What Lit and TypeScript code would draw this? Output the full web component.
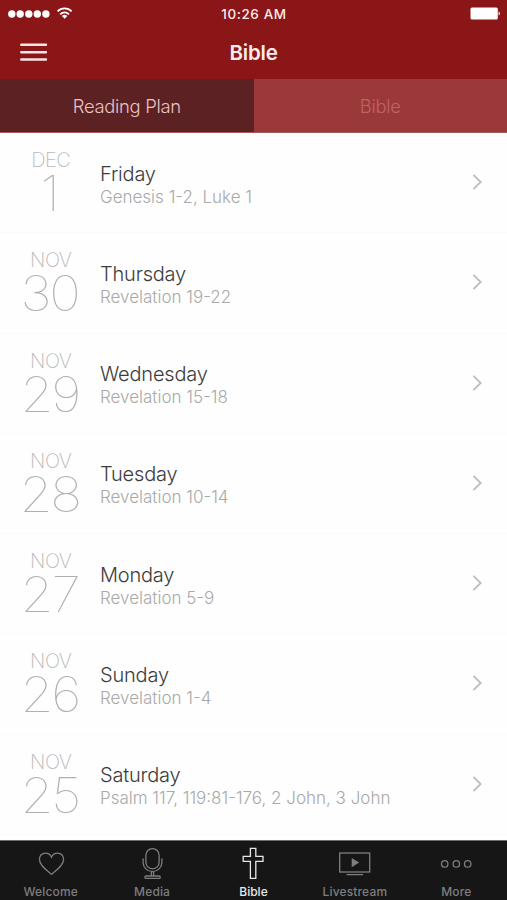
import { LitElement, html, css, svg } from "lit";
import { customElement } from "lit/decorators.js";
import { classMap } from "lit/directives/class-map.js";

interface Reading {
  month: string;
  day: string;
  weekday: string;
  passage: string;
}

const READINGS: Reading[] = [
  { month: "DEC", day: "1", weekday: "Friday", passage: "Genesis 1-2, Luke 1" },
  { month: "NOV", day: "30", weekday: "Thursday", passage: "Revelation 19-22" },
  { month: "NOV", day: "29", weekday: "Wednesday", passage: "Revelation 15-18" },
  { month: "NOV", day: "28", weekday: "Tuesday", passage: "Revelation 10-14" },
  { month: "NOV", day: "27", weekday: "Monday", passage: "Revelation 5-9" },
  { month: "NOV", day: "26", weekday: "Sunday", passage: "Revelation 1-4" },
  { month: "NOV", day: "25", weekday: "Saturday", passage: "Psalm 117, 119:81-176, 2 John, 3 John" },
];

const TABS = [
  {
    label: "Welcome",
    icon: svg`<path d="M20.5 30.2C15.5 26.2 8.4 21.6 8.4 15.3C8.4 11.6 11.1 9.1 14.4 9.1C17.1 9.1 19.4 10.6 20.5 13.2C21.6 10.6 23.9 9.1 26.6 9.1C29.9 9.1 32.6 11.6 32.6 15.3C32.6 21.6 25.5 26.2 20.5 30.2Z"/>`,
  },
  {
    label: "Media",
    icon: svg`<rect x="13.9" y="4.6" width="13.2" height="20.2" rx="6.6"/>
      <path d="M11.1 14.5V18.4A9.4 9.2 0 0 0 29.9 18.4V14.5M19.4 27.6V32M21.6 27.6V32"/>
      <rect x="12.9" y="32" width="15.4" height="2.4" rx="1.2"/>`,
  },
  {
    label: "Bible",
    icon: svg`<path d="M17.4 4.3H22.8V12.3H30V17.3H22.8V34.3H17.4V17.3H10.2V12.3H17.4Z"/>`,
  },
  {
    label: "Livestream",
    icon: svg`<rect x="4.7" y="9" width="30" height="19"/>
      <path d="M11.5 30.6H28"/>
      <path d="M16.7 14V23.2L24.2 18.6Z" fill="currentColor" stroke="none"/>`,
  },
  {
    label: "More",
    icon: svg`<circle cx="8.7" cy="19.9" r="3.2"/><circle cx="20.3" cy="19.9" r="3.2"/><circle cx="31.7" cy="19.9" r="3.2"/>`,
  },
];

@customElement("app-header")
class AppHeader extends LitElement {
  static styles = css`
    :host {
      display: block;
      background: #8b1618;
      color: #fbecec;
    }
    .status {
      height: 27px;
      display: grid;
      grid-template-columns: 1fr auto 1fr;
      align-items: center;
      padding: 0 6px 0 7px;
    }
    .battery {
      justify-self: end;
    }
    .time {
      font-size: 13.5px;
      font-weight: 500;
      letter-spacing: 0.6px;
    }
    .nav {
      height: 52px;
      display: grid;
      grid-template-columns: 1fr auto 1fr;
      align-items: center;
      padding: 0 19px;
      box-sizing: border-box;
    }
    .title {
      margin: 0;
      font-size: 20.5px;
      line-height: 24px;
      font-weight: 600;
      letter-spacing: -0.2px;
    }
    svg {
      display: block;
    }
  `;
  render() {
    return html`
      <div class="status">
        <svg width="68" height="16" viewBox="0 0 68 16" fill="#fff">
          ${[4.8, 13.2, 21.8, 30.3, 38.9].map((x) => svg`<circle cx=${x} cy="8" r="3.7"/>`)}
          <g fill="none" stroke="#fff" stroke-width="1.7">
            <path d="M50.6 5.3A9.8 9.8 0 0 1 64.6 5.3M53.2 8.3A6.2 6.2 0 0 1 62 8.3"/>
          </g>
          <path d="M57.6 12.8L54.9 10A3.9 3.9 0 0 1 60.3 10Z"/>
        </svg>
        <span class="time">10:26 AM</span>
        <svg class="battery" width="32" height="14" viewBox="0 0 32 14" fill="#fff">
          <rect x="1.5" y="0.6" width="27.3" height="12" rx="1.5"/>
          <path d="M29.6 4.6A2.2 2.2 0 0 1 29.6 8.6Z"/>
        </svg>
      </div>
      <div class="nav">
        <svg width="30" height="22" viewBox="0 0 30 22" stroke="#fbe4e4" stroke-width="2.5" stroke-linecap="round">
          <path d="M2.3 2.8H26.9M2.3 10.3H26.9M2.3 17.6H26.9"/>
        </svg>
        <h1 class="title">Bible</h1>
      </div>
    `;
  }
}

@customElement("reading-row")
class ReadingRow extends LitElement {
  static properties = { reading: { attribute: false } };
  declare reading: Reading;
  static styles = css`
    :host {
      display: grid;
      grid-template-columns: 100px 1fr auto;
      box-sizing: border-box;
      padding-right: 22px;
    }
    .date {
      display: flex;
      flex-direction: column;
      align-items: center;
      padding: 15px 0 0 1.5px;
      color: #b9b9b9;
    }
    .month {
      font-size: 20px;
      line-height: 24px;
      font-weight: 250;
      letter-spacing: -0.5px;
    }
    .day {
      font-size: 49px;
      line-height: 43px;
      font-weight: 100;
      letter-spacing: -2.2px;
      margin-right: 2.8px;
      transform: scaleX(1.09);
      color: #b0b0b0;
    }
    .text {
      padding-top: 28.5px;
      white-space: nowrap;
    }
    .weekday {
      font-size: 20px;
      line-height: 25px;
      font-weight: 350;
      letter-spacing: -0.2px;
      color: #3c3c3c;
    }
    .passage {
      font-size: 17px;
      line-height: 20px;
      font-weight: 300;
      letter-spacing: 0;
      color: #a9a9a9;
    }
    .chevron {
      margin-top: 40.2px;
    }
  `;
  render() {
    const r = this.reading;
    return html`
      <div class="date">
        <span class="month">${r.month}</span>
        <span class="day">${r.day}</span>
      </div>
      <div class="text">
        <div class="weekday">${r.weekday}</div>
        <div class="passage">${r.passage}</div>
      </div>
      <svg class="chevron" width="14" height="18" viewBox="0 0 14 18" fill="none" stroke="#bdbdbd" stroke-width="1.8">
        <path d="M2.4 1.9L9.7 9L2.4 16.1"/>
      </svg>
    `;
  }
}

@customElement("tab-bar")
class TabBar extends LitElement {
  static styles = css`
    :host {
      display: grid;
      grid-template-columns: repeat(5, 1fr);
      background: #161616;
      border-top: 1px solid #6e6e6e;
      box-sizing: border-box;
      height: 60px;
    }
    .tab {
      display: flex;
      flex-direction: column;
      align-items: center;
      padding-top: 3px;
      color: #7e7e7e;
    }
    .active {
      color: #e8e8e8;
    }
    .label {
      font-size: 12px;
      line-height: 16px;
      font-weight: 450;
      letter-spacing: 0.15px;
      margin-top: 1px;
    }
    .active .label {
      font-weight: 550;
      letter-spacing: 0;
    }
    svg {
      display: block;
      flex: none;
    }
  `;
  render() {
    return TABS.map(
      (t) => html`
        <div class=${classMap({ tab: true, active: t.label === "Bible" })}>
          <svg width="40" height="39" viewBox="0 0 40 39" fill="none" stroke="currentColor" stroke-width="1.3">${t.icon}</svg>
          <span class="label">${t.label}</span>
        </div>
      `
    );
  }
}

@customElement("app-root")
class AppRoot extends LitElement {
  static styles = css`
    :host {
      display: flex;
      flex-direction: column;
      height: 900px;
      overflow: hidden;
      background: #fefefe;
      font-family: Inter, "Liberation Sans", sans-serif;
    }
    .segments {
      display: grid;
      grid-template-columns: 1fr 1fr;
      height: 54px;
      flex: none;
      box-sizing: border-box;
      border-bottom: 1px solid #a65a5c;
      background: #9b383a;
    }
    .segment {
      display: flex;
      align-items: center;
      justify-content: center;
      font-size: 18.4px;
      font-weight: 350;
      letter-spacing: -0.3px;
      color: #bd6467;
    }
    .selected {
      background: #5c2123;
      color: #e8c4c4;
    }
    .list {
      flex: 1;
      min-height: 0;
      display: grid;
      grid-auto-rows: 100.25px;
    }
    .row {
      border-bottom: 1px solid #fafafa;
    }
    app-header,
    tab-bar {
      flex: none;
    }
  `;
  render() {
    return html`
      <app-header></app-header>
      <div class="segments">
        <div class="segment selected">Reading Plan</div>
        <div class="segment">Bible</div>
      </div>
      <div class="list">
        ${READINGS.map((r) => html`<reading-row class="row" .reading=${r}></reading-row>`)}
      </div>
      <tab-bar></tab-bar>
    `;
  }
}
